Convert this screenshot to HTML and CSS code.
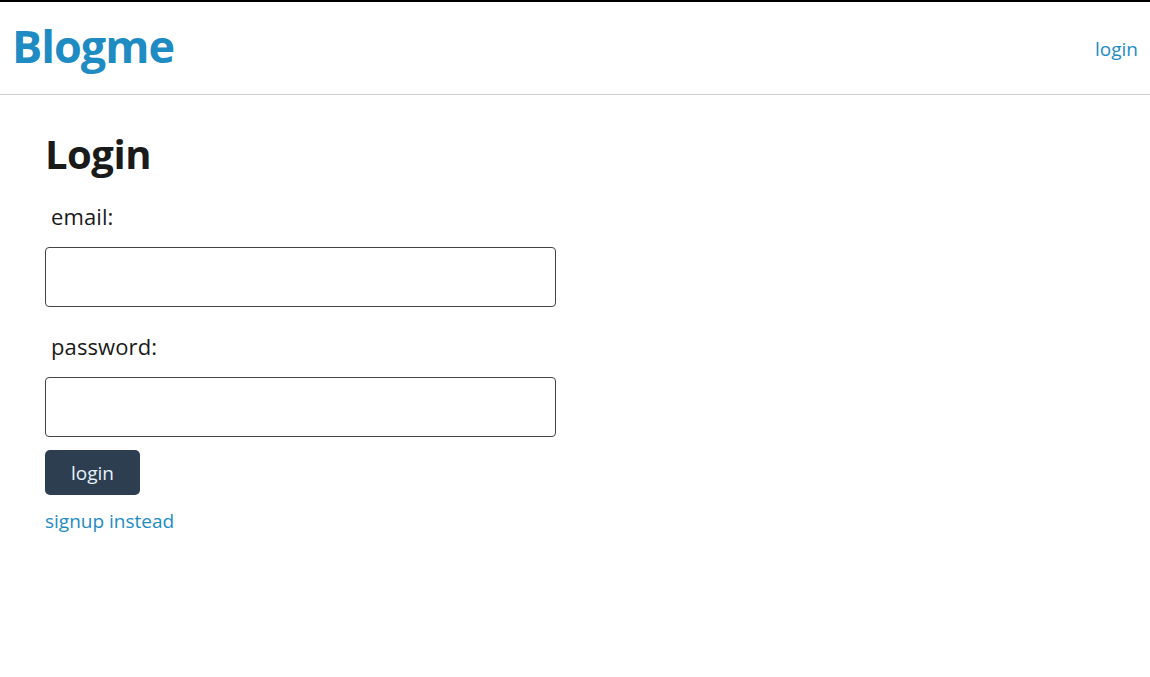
FILE: index.html
```html
<!DOCTYPE html>
<html>
<head>
<meta charset="utf-8">
<link rel="stylesheet" href="styles.css">
</head>
<body>
<header class="topbar">
  <a class="brand" href="#">Blogme</a>
  <nav class="nav"><a class="nav-link" href="#">login</a></nav>
</header>
<main class="main">
  <h2 class="title">Login</h2>
  <form class="form">
    <label class="label">email:</label>
    <input class="field" type="text">
    <label class="label label-pw">password:</label>
    <input class="field" type="password">
    <button class="btn" type="button">login</button>
    <a class="alt-link" href="#">signup instead</a>
  </form>
</main>
</body>
</html>
```
FILE: styles.css
```css
* { box-sizing: border-box; }
html, body { margin: 0; padding: 0; }
body {
  font-family: "Open Sans", "Noto Sans", sans-serif;
  color: #1a1a1a;
  background: #fff;
  border-top: 2px solid #000;
  width: 1150px;
  height: 677px;
}
.topbar {
  height: 93px;
  border-bottom: 1px solid #cfcfcf;
  display: flex;
  align-items: center;
  justify-content: space-between;
  padding: 0 12px 0 12px;
}
.brand {
  font-size: 45px;
  font-weight: 700;
  color: #1e8bc3;
  text-decoration: none;
  letter-spacing: -1px;
  line-height: 1;
  margin-bottom: 6px;
}
.nav {
  padding-top: 2px;
}
.nav-link {
  font-size: 19px;
  color: #1e8bc3;
  text-decoration: none;
}
.main {
  padding-left: 45px;
}
.title {
  margin: 35px 0 0 0;
  font-size: 40px;
  line-height: 48px;
  font-weight: 700;
  letter-spacing: -0.5px;
}
.form {
  display: flex;
  flex-direction: column;
  align-items: flex-start;
  margin-top: 24px;
}
.label {
  font-size: 22px;
  line-height: 28px;
  padding-left: 6px;
  letter-spacing: 0.1px;
}
.label-pw { margin-top: 25px; }
.field {
  margin-top: 17px;
  width: 511px;
  height: 60px;
  border: 1px solid #444;
  border-radius: 4px;
  font-size: 18px;
}
.btn {
  margin-top: 13px;
  width: 95px;
  height: 45px;
  background: #2c3e50;
  color: #e6f2fb;
  border: none;
  border-radius: 5px;
  font-family: inherit;
  font-size: 19px;
}
.alt-link {
  margin-top: 12px;
  font-size: 19px;
  line-height: 28px;
  color: #1e8bc3;
  text-decoration: none;
}
```
